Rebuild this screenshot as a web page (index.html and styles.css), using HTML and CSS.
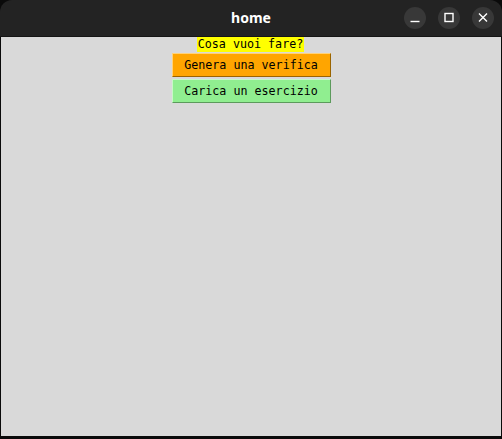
FILE: index.html
```html
<!DOCTYPE html>
<html>
<head>
<meta charset="utf-8">
<link rel="stylesheet" href="styles.css">
</head>
<body>
<div class="window">
  <header class="titlebar">
    <span class="title">home</span>
    <div class="controls">
      <span class="ctl"><svg width="22" height="22" viewBox="0 0 22 22"><path d="M6.5 14.5h9" stroke="#fff" stroke-width="1.4"/></svg></span>
      <span class="ctl"><svg width="22" height="22" viewBox="0 0 22 22"><rect x="7" y="6.5" width="8" height="8" fill="none" stroke="#fff" stroke-width="1.4"/></svg></span>
      <span class="ctl"><svg width="22" height="22" viewBox="0 0 22 22"><path d="M7 6.5l8 8M15 6.5l-8 8" stroke="#fff" stroke-width="1.4"/></svg></span>
    </div>
  </header>
  <main class="content">
    <div class="label">Cosa vuoi fare?</div>
    <button class="btn btn-orange">Genera una verifica</button>
    <button class="btn btn-green">Carica un esercizio</button>
  </main>
  <div class="footer"></div>
</div>
</body>
</html>
```

FILE: styles.css
```css
html, body {
  margin: 0;
  padding: 0;
  background: #0a0a0a;
}
.window {
  width: 502px;
  height: 439px;
  display: flex;
  flex-direction: column;
  overflow: hidden;
}
.titlebar {
  height: 36px;
  background: #232323;
  border-radius: 12px 12px 0 0;
  border-bottom: 1px solid #151515;
  position: relative;
  display: flex;
  align-items: center;
  justify-content: center;
  flex-shrink: 0;
}
.title {
  color: #ffffff;
  font-family: "Noto Sans", "DejaVu Sans", sans-serif;
  font-weight: bold;
  font-size: 14px;
  margin-top: -1px;
}
.controls {
  position: absolute;
  right: 8px;
  top: 7px;
  display: flex;
  gap: 12px;
}
.ctl {
  width: 22px;
  height: 22px;
  border-radius: 50%;
  background: #383838;
  display: flex;
}
.content {
  flex: 1;
  background: #d9d9d9;
  margin: 0 1px;
  display: flex;
  flex-direction: column;
  align-items: center;
  font-family: "DejaVu Sans Mono", "Liberation Mono", monospace;
  font-size: 11.7px;
  color: #000;
}
.label {
  background: #ffff00;
  height: 15px;
  line-height: 15px;
  padding: 0 1px;
  margin-left: -1px;
}
.btn {
  font: inherit;
  color: #000;
  width: 159px;
  height: 24px;
  margin: 1px 0;
  padding: 0;
  border: 1px solid;
  border-radius: 0;
  line-height: 20px;
  text-align: center;
}
.btn-orange {
  background: #ffa500;
  border-color: #ffd27a #9a6400 #9a6400 #ffd27a;
}
.btn-green {
  background: #90ee90;
  border-color: #c8f8c8 #5c9a5c #5c9a5c #c8f8c8;
}
.footer {
  height: 3px;
  background: #0a0a0a;
  flex-shrink: 0;
}
```
